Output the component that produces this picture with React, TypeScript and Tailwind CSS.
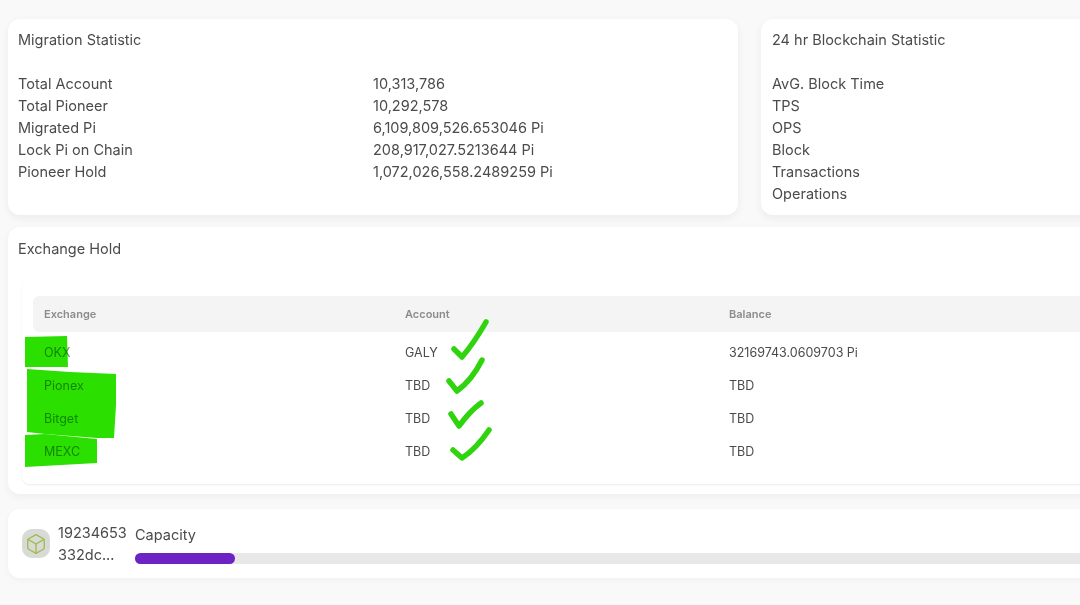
import { Box } from 'lucide-react'

const migrationRows = [
  ['Total Account', '10,313,786'],
  ['Total Pioneer', '10,292,578'],
  ['Migrated Pi', '6,109,809,526.653046 Pi'],
  ['Lock Pi on Chain', '208,917,027.5213644 Pi'],
  ['Pioneer Hold', '1,072,026,558.2489259 Pi'],
]

const chainRows = ['AvG. Block Time', 'TPS', 'OPS', 'Block', 'Transactions', 'Operations']

const exchangeRows = [
  ['OKX', 'GALY', '32169743.0609703 Pi'],
  ['Pionex', 'TBD', 'TBD'],
  ['Bitget', 'TBD', 'TBD'],
  ['MEXC', 'TBD', 'TBD'],
]

// hand drawn highlighter marks on top of the page
const Marks = () => (
  <svg className="pointer-events-none absolute left-0 top-0 h-[605px] w-[1080px]" viewBox="0 0 1080 605" fill="none">
    <g fill="#2be000" style={{ mixBlendMode: 'multiply' }}>
      <polygon points="25,337 67,336 68,367 25,367" />
      <polygon points="27,369 70,372 116,374 116,405 114,438 97,438 45,434 27,432" />
      <polygon points="25,435 45,434 97,439 97,463 25,467" />
    </g>
    <g stroke="#2fd40f" strokeWidth="5.5" strokeLinecap="round" strokeLinejoin="round">
      <path d="M454 349 L462 357 Q474 343 486 322" />
      <path d="M449 381 L457 391 Q472 380 482 360" />
      <path d="M451 414 L459 426 Q470 411 481 403" />
      <path d="M453 450 L462 458 Q476 449 489 430" />
    </g>
  </svg>
)

export default function App() {
  return (
    <div className="relative h-[605px] w-[1080px] overflow-hidden bg-[#f9f9f9] font-['Inter',sans-serif] text-[14.5px] leading-[22px] text-[#4b4b4b] blur-[0.5px]">
      <div className="flex w-[1100px] flex-col pl-2 pt-[19px]">
        <div className="flex gap-[23px]">
          <section className="h-[196px] w-[730px] rounded-xl bg-white pl-[10px] pt-[10px] shadow-[0_3px_8px_rgba(0,0,0,0.06)]">
            <h2 className="mb-[22px]">Migration Statistic</h2>
            {migrationRows.map(([label, value]) => (
              <div key={label} className="flex">
                <span className="w-[355px]">{label}</span>
                <span>{value}</span>
              </div>
            ))}
          </section>
          <section className="h-[196px] w-[339px] rounded-xl bg-white pl-[11px] pt-[10px] shadow-[0_3px_8px_rgba(0,0,0,0.06)]">
            <h2 className="mb-[22px]">24 hr Blockchain Statistic</h2>
            {chainRows.map((label) => (
              <div key={label}>{label}</div>
            ))}
          </section>
        </div>

        <section className="mt-3 h-[267px] w-[1092px] rounded-xl bg-white pl-[10px] pt-[11px] shadow-[0_3px_8px_rgba(0,0,0,0.05)]">
          <h2>Exchange Hold</h2>
          <div className="ml-1 mt-[20px] h-[204px] rounded-lg pl-[11px] pt-[16px] shadow-[0_1px_2px_rgba(0,0,0,0.08)]">
            <div className="flex h-9 items-center rounded-l-md bg-[#f4f4f4] pl-[11px] text-[11px] font-semibold text-[#8c8c8c]">
              <span className="w-[361px]">Exchange</span>
              <span className="w-[324px]">Account</span>
              <span>Balance</span>
            </div>
            <div className="mt-[5px] text-[12.5px]">
              {exchangeRows.map(([name, account, balance]) => (
                <div key={name} className="flex h-[32.8px] items-center pl-[11px]">
                  <span className="w-[361px] text-[#5a9a5a]">{name}</span>
                  <span className="w-[324px]">{account}</span>
                  <span>{balance}</span>
                </div>
              ))}
            </div>
          </div>
        </section>

        <section className="mt-[15px] flex h-[69px] w-[1092px] items-center rounded-xl bg-white pl-[14px] shadow-[0_2px_6px_rgba(0,0,0,0.04)]">
          <div className="flex h-[29px] w-[28px] items-center justify-center rounded-[10px] bg-[#d8dad6]">
            <Box className="h-[22px] w-[22px] text-[#a2bb50]" strokeWidth={1.5} />
          </div>
          <div className="ml-2 w-[77px]">
            <div>19234653</div>
            <div>332dc...</div>
          </div>
          <div className="flex-1 pr-4">
            <div>Capacity</div>
            <div className="mt-[7px] h-[11px] rounded-full bg-[#e8e8e8]">
              <div className="h-full w-[100px] rounded-full bg-[#6d22c4]" />
            </div>
          </div>
        </section>
      </div>
      <Marks />
    </div>
  )
}
